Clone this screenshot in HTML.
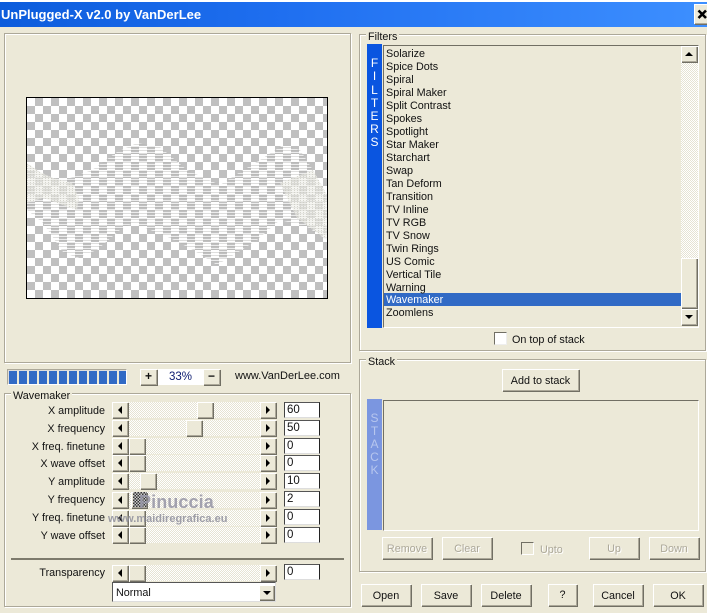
<!DOCTYPE html>
<html>
<head>
<meta charset="utf-8">
<style>
html,body{margin:0;padding:0;background:#ece9d8;}
#p{position:relative;width:707px;height:613px;overflow:hidden;background:#ece9d8;font:10.8px/13px "Liberation Sans",sans-serif;color:#111;}
#p div,#p span.a{position:absolute;box-sizing:border-box;}
.g{border:1px solid #aca899;box-shadow:inset 1px 1px #fff,1px 1px #fff;}
.gl{background:#ece9d8;padding:0 2px;white-space:nowrap;height:13px;margin-top:1px;}
.b{background:#ece9d8;box-shadow:inset 1px 1px #fff,inset -1px -1px #aca899,1px 1px #716f64;text-align:center;white-space:nowrap;}
.s{background:#ece9d8;box-shadow:inset 1px 1px #fff,inset -1px -1px #aca899,1px 1px #716f64;}
.tr{left:129px;width:131px;background:conic-gradient(#e6e3d3 25%,#fff 0 50%,#e6e3d3 0 75%,#fff 0) 0 0/2px 2px;}
.lb{left:0;width:105px;text-align:right;white-space:nowrap;margin-top:1px;}
.in{left:284px;width:36px;background:#fff;border:1px solid;border-color:#555 #222 #ddd #444;padding-left:2px;line-height:14px;font-size:11.5px;}
.ct{width:0;height:0;}
.d{color:#aca899;text-shadow:1px 1px #fff;}
.it{left:386px;white-space:nowrap;height:13px;margin-top:1px;}
.vl{left:367px;width:15px;text-align:center;height:13px;font-size:12px;}
</style>
</head>
<body>
<div id="p">
<div style="left:0;top:0;width:707px;height:2px;background:#fff"></div>
<div style="left:0;top:2px;width:707px;height:25px;background:linear-gradient(90deg,#0c5cdc 0%,#1f6ff0 40%,#3d8fff 100%)"></div>
<div style="left:1px;top:6px;color:#fff;font:bold 13px/18px 'Liberation Sans',sans-serif;white-space:nowrap">UnPlugged-X v2.0 by VanDerLee</div>
<div class="b" style="left:694px;top:4px;width:14px;height:20px">
<svg width="14" height="20" style="position:absolute;left:0;top:0" xmlns="http://www.w3.org/2000/svg"><path d="M4.5 6.5L12 14M12 6.5L4.5 14" stroke="#000" stroke-width="2.6" fill="none"/></svg>
</div>

<!-- preview -->
<div class="g" style="left:4px;top:33px;width:347px;height:330px"></div>
<div style="left:26px;top:97px;width:302px;height:202px;border:1px solid #000;background:conic-gradient(#c0c0c0 25%,#fff 0 50%,#c0c0c0 0 75%,#fff 0) 0 0/16px 16px">
<svg width="300" height="200" style="position:absolute;left:0;top:0" xmlns="http://www.w3.org/2000/svg">
<defs>
<pattern id="w" width="4" height="3" patternUnits="userSpaceOnUse"><rect width="4" height="1" fill="#fff" fill-opacity=".7"/><rect y="1" width="4" height="1" fill="#b0b0ac" fill-opacity=".4"/></pattern>
<pattern id="w2" width="3" height="2" patternUnits="userSpaceOnUse"><rect width="3" height="2" fill="#efefe8" fill-opacity=".6"/><rect width="1" height="1" fill="#c8c8c0" fill-opacity=".7"/></pattern>
</defs>
<path d="M0 65L13 74 26 80 43 80 65 72 90 54 110 45 133 49 160 72 193 87 213 74 233 62 256 47 273 52 286 72 300 97V142L280 129 253 122 230 142 210 155 190 167 166 152 143 140 106 125 93 132 70 152 50 160 36 154 16 125 0 112Z" fill="url(#w)"/>
<path d="M0 65L13 74 26 80 45 85 52 100 50 112 30 105 16 100 0 105Z" fill="url(#w2)"/>
<path d="M253 85L286 72 300 97V142L270 120Z" fill="url(#w2)"/>
</svg>
</div>

<!-- progress and zoom -->
<div style="left:7px;top:369px;width:120px;height:16px;background:#ece9d8;border:1px solid;border-color:#aca899 #fff #fff #aca899;box-shadow:inset 0 0 0 1px #ddd"></div>
<div style="left:9px;top:371px;width:117px;height:13px;background:repeating-linear-gradient(90deg,#316ac5 0 8px,#ece9d8 8px 10px)"></div>
<div class="b" style="left:140px;top:369px;width:17px;height:16px;font:bold 12px/15px 'Liberation Sans',sans-serif">+</div>
<div style="left:158px;top:369px;width:45px;height:16px;background:#fff;color:#0a1a70;text-align:center;line-height:16px;font-size:11.5px">33%</div>
<div class="b" style="left:203px;top:369px;width:17px;height:16px;font:bold 12px/14px 'Liberation Sans',sans-serif">−</div>
<div style="left:235px;top:370px;white-space:nowrap;font-size:11px">www.VanDerLee.com</div>

<!-- wavemaker -->
<div class="g" style="left:4px;top:393px;width:347px;height:214px"></div>
<div class="gl" style="left:11px;top:389px">Wavemaker</div>

<div class="lb" style="top:404px">X amplitude</div>
<div class="lb" style="top:422px">X frequency</div>
<div class="lb" style="top:440px">X freq. finetune</div>
<div class="lb" style="top:457px">X wave offset</div>
<div class="lb" style="top:475px">Y amplitude</div>
<div class="lb" style="top:493px">Y frequency</div>
<div class="lb" style="top:511px">Y freq. finetune</div>
<div class="lb" style="top:529px">Y wave offset</div>
<div class="lb" style="top:566px">Transparency</div>

<div class="tr" style="top:402px;height:16px"></div>
<div class="tr" style="top:420px;height:16px"></div>
<div class="tr" style="top:438px;height:16px"></div>
<div class="tr" style="top:455px;height:16px"></div>
<div class="tr" style="top:473px;height:16px"></div>
<div class="tr" style="top:492px;height:16px"></div>
<div class="tr" style="top:510px;height:16px"></div>
<div class="tr" style="top:527px;height:16px"></div>
<div class="tr" style="top:565px;height:16px"></div>

<!-- left arrows -->
<div class="s" style="left:112px;top:402px;width:16px;height:16px"></div><div class="ct" style="left:118px;top:406px;border:4px solid transparent;border-left:0;border-right:4px solid #000"></div>
<div class="s" style="left:112px;top:420px;width:16px;height:16px"></div><div class="ct" style="left:118px;top:424px;border:4px solid transparent;border-left:0;border-right:4px solid #000"></div>
<div class="s" style="left:112px;top:438px;width:16px;height:16px"></div><div class="ct" style="left:118px;top:442px;border:4px solid transparent;border-left:0;border-right:4px solid #000"></div>
<div class="s" style="left:112px;top:455px;width:16px;height:16px"></div><div class="ct" style="left:118px;top:459px;border:4px solid transparent;border-left:0;border-right:4px solid #000"></div>
<div class="s" style="left:112px;top:473px;width:16px;height:16px"></div><div class="ct" style="left:118px;top:477px;border:4px solid transparent;border-left:0;border-right:4px solid #000"></div>
<div class="s" style="left:112px;top:492px;width:16px;height:16px"></div><div class="ct" style="left:118px;top:496px;border:4px solid transparent;border-left:0;border-right:4px solid #000"></div>
<div class="s" style="left:112px;top:510px;width:16px;height:16px"></div><div class="ct" style="left:118px;top:514px;border:4px solid transparent;border-left:0;border-right:4px solid #000"></div>
<div class="s" style="left:112px;top:527px;width:16px;height:16px"></div><div class="ct" style="left:118px;top:531px;border:4px solid transparent;border-left:0;border-right:4px solid #000"></div>
<div class="s" style="left:112px;top:565px;width:16px;height:16px"></div><div class="ct" style="left:118px;top:569px;border:4px solid transparent;border-left:0;border-right:4px solid #000"></div>

<!-- right arrows -->
<div class="s" style="left:260px;top:402px;width:16px;height:16px"></div><div class="ct" style="left:266px;top:406px;border:4px solid transparent;border-right:0;border-left:4px solid #000"></div>
<div class="s" style="left:260px;top:420px;width:16px;height:16px"></div><div class="ct" style="left:266px;top:424px;border:4px solid transparent;border-right:0;border-left:4px solid #000"></div>
<div class="s" style="left:260px;top:438px;width:16px;height:16px"></div><div class="ct" style="left:266px;top:442px;border:4px solid transparent;border-right:0;border-left:4px solid #000"></div>
<div class="s" style="left:260px;top:455px;width:16px;height:16px"></div><div class="ct" style="left:266px;top:459px;border:4px solid transparent;border-right:0;border-left:4px solid #000"></div>
<div class="s" style="left:260px;top:473px;width:16px;height:16px"></div><div class="ct" style="left:266px;top:477px;border:4px solid transparent;border-right:0;border-left:4px solid #000"></div>
<div class="s" style="left:260px;top:492px;width:16px;height:16px"></div><div class="ct" style="left:266px;top:496px;border:4px solid transparent;border-right:0;border-left:4px solid #000"></div>
<div class="s" style="left:260px;top:510px;width:16px;height:16px"></div><div class="ct" style="left:266px;top:514px;border:4px solid transparent;border-right:0;border-left:4px solid #000"></div>
<div class="s" style="left:260px;top:527px;width:16px;height:16px"></div><div class="ct" style="left:266px;top:531px;border:4px solid transparent;border-right:0;border-left:4px solid #000"></div>
<div class="s" style="left:260px;top:565px;width:16px;height:16px"></div><div class="ct" style="left:266px;top:569px;border:4px solid transparent;border-right:0;border-left:4px solid #000"></div>

<!-- thumbs -->
<div class="s" style="left:197px;top:402px;width:16px;height:16px"></div>
<div class="s" style="left:186px;top:420px;width:16px;height:16px"></div>
<div class="s" style="left:129px;top:438px;width:16px;height:16px"></div>
<div class="s" style="left:129px;top:455px;width:16px;height:16px"></div>
<div class="s" style="left:140px;top:473px;width:16px;height:16px"></div>
<div class="s" style="left:131px;top:492px;width:16px;height:16px"></div>
<div class="s" style="left:129px;top:510px;width:16px;height:16px"></div>
<div class="s" style="left:129px;top:527px;width:16px;height:16px"></div>
<div class="s" style="left:129px;top:565px;width:16px;height:16px"></div>

<!-- inputs -->
<div class="in" style="top:402px;height:16px">60</div>
<div class="in" style="top:420px;height:16px">50</div>
<div class="in" style="top:438px;height:16px">0</div>
<div class="in" style="top:455px;height:16px">0</div>
<div class="in" style="top:473px;height:16px">10</div>
<div class="in" style="top:491px;height:16px">2</div>
<div class="in" style="top:509px;height:16px">0</div>
<div class="in" style="top:527px;height:16px">0</div>
<div class="in" style="top:564px;height:16px">0</div>

<!-- watermark -->
<div style="left:133px;top:492px;width:14px;height:15px;background:conic-gradient(#333 25%,#ccc 0 50%,#333 0 75%,#ccc 0) 0 0/3px 3px"></div>
<div style="left:139px;top:491px;font:bold 18px/22px 'Liberation Sans',sans-serif;color:#9a99a8;letter-spacing:.1px;white-space:nowrap;opacity:.9">Pinuccia</div>
<div style="left:108px;top:513px;font:bold 11px/13px 'Liberation Sans',sans-serif;color:#8f8f9c;white-space:nowrap;opacity:.85">www.maidiregrafica.eu</div>

<div style="left:11px;top:558px;width:333px;height:2px;background:#7d7a6c"></div>

<!-- combobox -->
<div style="left:112px;top:582px;width:164px;height:20px;background:#fff;border:1px solid;border-color:#555 #ddd #ddd #555;padding-left:3px;line-height:20px">Normal</div>
<div class="s" style="left:259px;top:585px;width:15px;height:15px"></div>
<div class="ct" style="left:263px;top:591px;border:4px solid transparent;border-bottom:0;border-top:4px solid #000"></div>

<!-- filters -->
<div class="g" style="left:359px;top:34px;width:347px;height:317px"></div>
<div class="gl" style="left:366px;top:30px">Filters</div>
<div style="left:367px;top:44px;width:15px;height:284px;background:#0a55e0"></div>
<div class="vl" style="top:57px;color:#fff">F</div>
<div class="vl" style="top:70px;color:#fff">I</div>
<div class="vl" style="top:84px;color:#fff">L</div>
<div class="vl" style="top:97px;color:#fff">T</div>
<div class="vl" style="top:110px;color:#fff">E</div>
<div class="vl" style="top:123px;color:#fff">R</div>
<div class="vl" style="top:136px;color:#fff">S</div>
<div style="left:383px;top:45px;width:316px;height:283px;border:1px solid;border-color:#716f64 #fff #fff #716f64"></div>
<div style="left:681px;top:46px;width:17px;height:280px;background:conic-gradient(#e6e3d3 25%,#fff 0 50%,#e6e3d3 0 75%,#fff 0) 0 0/2px 2px"></div>
<div class="s" style="left:681px;top:46px;width:16px;height:16px"></div>
<div class="ct" style="left:685px;top:52px;border:4px solid transparent;border-top:0;border-bottom:4px solid #000"></div>
<div class="s" style="left:681px;top:258px;width:16px;height:50px"></div>
<div class="s" style="left:681px;top:309px;width:16px;height:16px"></div>
<div class="ct" style="left:685px;top:315px;border:4px solid transparent;border-bottom:0;border-top:4px solid #000"></div>

<div style="left:384px;top:293px;width:297px;height:13px;background:#316ac5"></div>
<div class="it" style="top:47px">Solarize</div>
<div class="it" style="top:60px">Spice Dots</div>
<div class="it" style="top:73px">Spiral</div>
<div class="it" style="top:86px">Spiral Maker</div>
<div class="it" style="top:99px">Split Contrast</div>
<div class="it" style="top:112px">Spokes</div>
<div class="it" style="top:125px">Spotlight</div>
<div class="it" style="top:138px">Star Maker</div>
<div class="it" style="top:151px">Starchart</div>
<div class="it" style="top:164px">Swap</div>
<div class="it" style="top:177px">Tan Deform</div>
<div class="it" style="top:190px">Transition</div>
<div class="it" style="top:203px">TV Inline</div>
<div class="it" style="top:216px">TV RGB</div>
<div class="it" style="top:229px">TV Snow</div>
<div class="it" style="top:242px">Twin Rings</div>
<div class="it" style="top:255px">US Comic</div>
<div class="it" style="top:268px">Vertical Tile</div>
<div class="it" style="top:281px">Warning</div>
<div class="it" style="top:293px;color:#fff">Wavemaker</div>
<div class="it" style="top:306px">Zoomlens</div>

<div style="left:494px;top:332px;width:13px;height:13px;background:#fff;border:1px solid;border-color:#716f64 #eee #eee #716f64"></div>
<div style="left:512px;top:334px;white-space:nowrap">On top of stack</div>

<!-- stack -->
<div class="g" style="left:359px;top:359px;width:347px;height:213px"></div>
<div class="gl" style="left:366px;top:355px">Stack</div>
<div class="b" style="left:502px;top:369px;width:77px;height:22px;line-height:25px">Add to stack</div>
<div style="left:367px;top:399px;width:15px;height:131px;background:#7b96e0"></div>
<div class="vl" style="top:412px;color:#b7c6ee">S</div>
<div class="vl" style="top:425px;color:#b7c6ee">T</div>
<div class="vl" style="top:438px;color:#b7c6ee">A</div>
<div class="vl" style="top:451px;color:#b7c6ee">C</div>
<div class="vl" style="top:464px;color:#b7c6ee">K</div>
<div style="left:383px;top:400px;width:316px;height:131px;border:1px solid;border-color:#716f64 #fff #fff #716f64"></div>

<div class="b d" style="left:382px;top:537px;width:50px;height:22px;line-height:25px">Remove</div>
<div class="b d" style="left:442px;top:537px;width:50px;height:22px;line-height:25px">Clear</div>
<div style="left:521px;top:542px;width:13px;height:13px;border:1px solid;border-color:#716f64 #fff #fff #716f64"></div>
<div class="d" style="left:540px;top:544px">Upto</div>
<div class="b d" style="left:589px;top:537px;width:50px;height:22px;line-height:25px">Up</div>
<div class="b d" style="left:649px;top:537px;width:50px;height:22px;line-height:25px">Down</div>

<!-- bottom buttons -->
<div class="b" style="left:361px;top:584px;width:50px;height:22px;line-height:24px">Open</div>
<div class="b" style="left:421px;top:584px;width:50px;height:22px;line-height:24px">Save</div>
<div class="b" style="left:481px;top:584px;width:50px;height:22px;line-height:24px">Delete</div>
<div class="b" style="left:548px;top:584px;width:29px;height:22px;line-height:22px">?</div>
<div class="b" style="left:593px;top:584px;width:50px;height:22px;line-height:24px">Cancel</div>
<div class="b" style="left:653px;top:584px;width:50px;height:22px;line-height:24px">OK</div>
</div>
</body>
</html>
